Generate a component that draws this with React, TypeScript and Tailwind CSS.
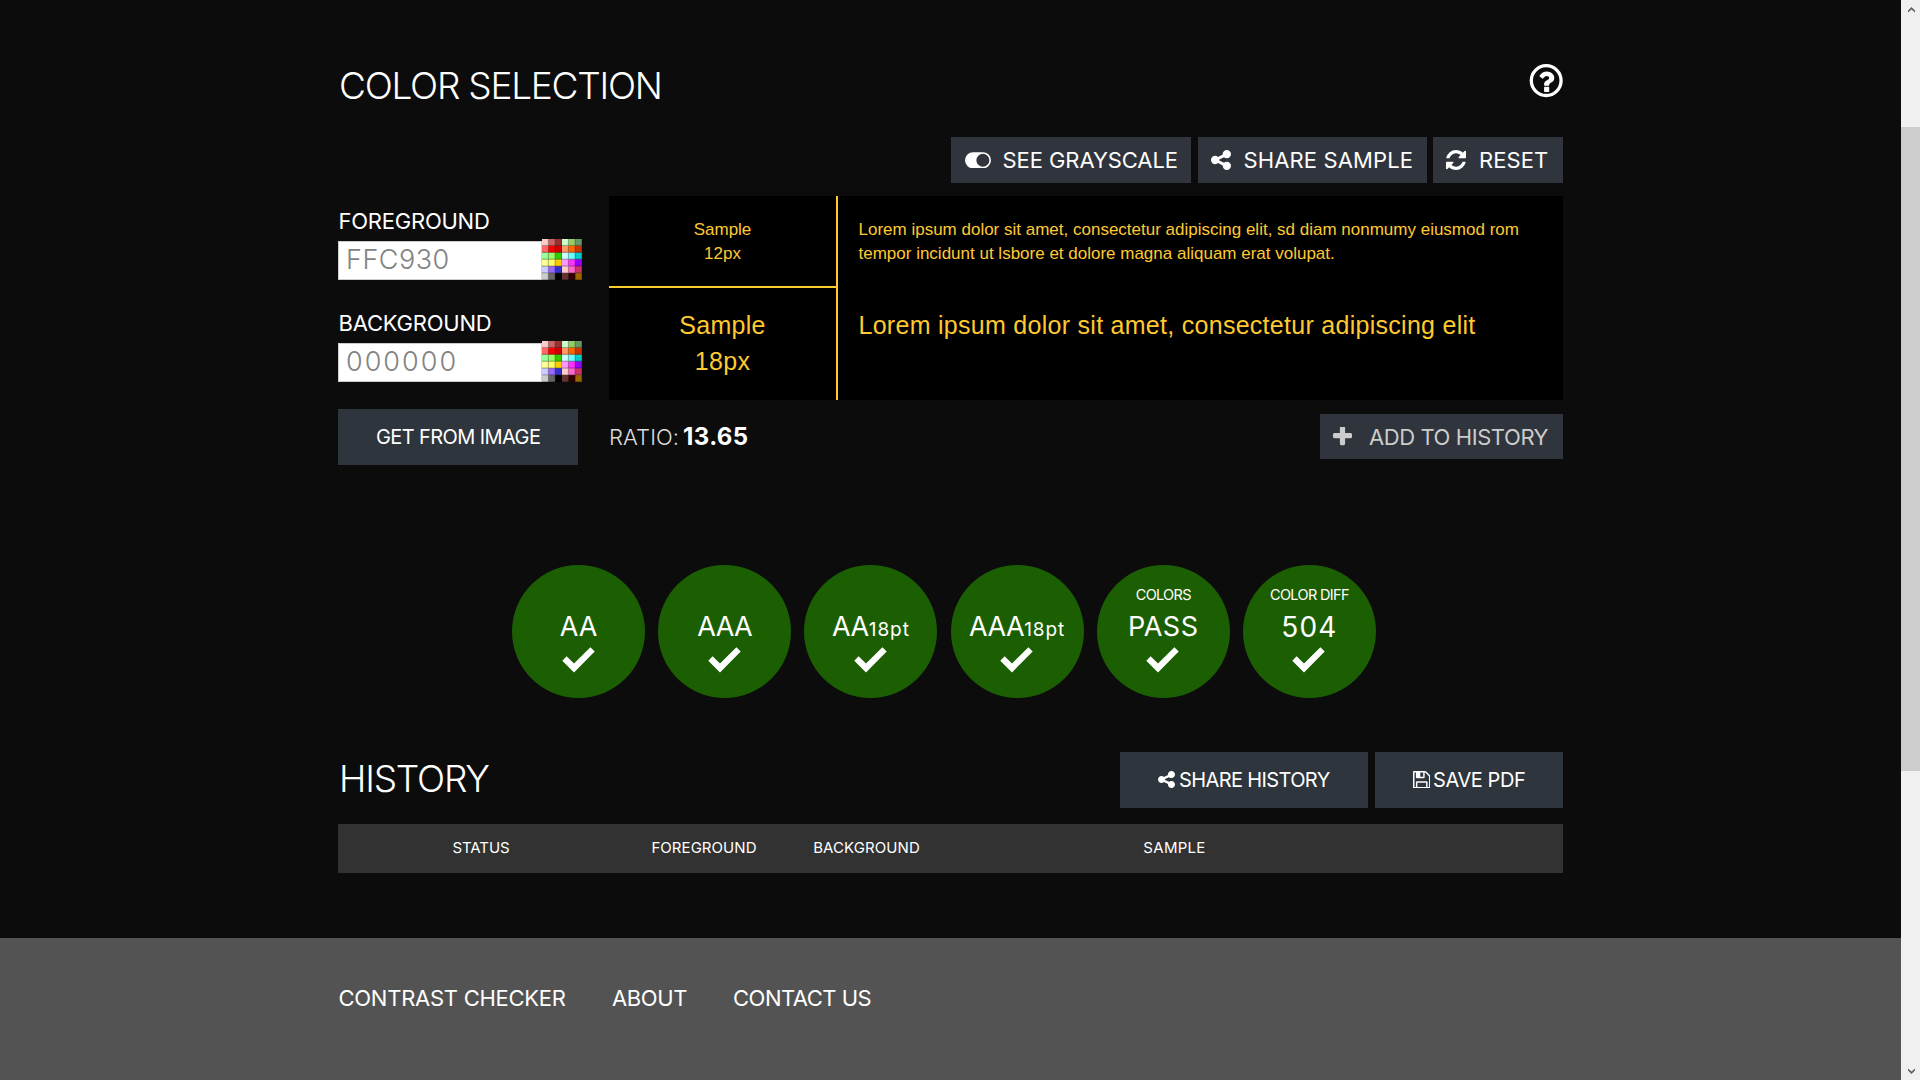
import React from "react";

const SHARE =
  "M1344 1024q133 0 226.5 93.5t93.5 226.5-93.5 226.5-226.5 93.5-226.5-93.5-93.5-226.5q0-12 2-34l-360-180q-92 86-218 86-133 0-226.5-93.5t-93.5-226.5 93.5-226.5 226.5-93.5q126 0 218 86l360-180q-2-22-2-34 0-133 93.5-226.5t226.5-93.5 226.5 93.5 93.5 226.5-93.5 226.5-226.5 93.5q-126 0-218-86l-360 180q2 22 2 34t-2 34l360 180q92-86 218-86z";
const REFRESH =
  "M1639 1056q0 5-1 7-64 268-268 434.5t-478 166.5q-146 0-282.5-55t-243.5-157l-129 129q-19 19-45 19t-45-19-19-45v-448q0-26 19-45t45-19h448q26 0 45 19t19 45-19 45l-137 137q71 66 161 102t187 36q134 0 250-65t186-179q11-17 53-117 8-23 30-23h192q13 0 22.5 9.5t9.5 22.5zm25-800v448q0 26-19 45t-45 19h-448q-26 0-45-19t-19-45 19-45l138-138q-148-137-349-137-134 0-250 65t-186 179q-11 17-53 117-8 23-30 23h-199q-13 0-22.5-9.5t-9.5-22.5v-7q65-268 270-434.5t480-166.5q146 0 284 55.5t245 156.5l130-129q19-19 45-19t45 19 19 45z";
const PLUS =
  "M1600 736v192q0 40-28 68t-68 28h-416v416q0 40-28 68t-68 28h-192q-40 0-68-28t-28-68v-416h-416q-40 0-68-28t-28-68v-192q0-40 28-68t68-28h416v-416q0-40 28-68t68-28h192q40 0 68 28t28 68v416h416q40 0 68 28t28 68z";
const QUESTION =
  "M1088 1256v240q0 16-12 28t-28 12h-240q-16 0-28-12t-12-28v-240q0-16 12-28t28-12h240q16 0 28 12t12 28zm316-600q0 54-15.5 101t-35 76.5-55 59.5-57.5 43.5-61 35.5q-41 23-68.5 65t-27.5 67q0 17-12 32.5t-28 15.5h-240q-15 0-25.5-18.5t-10.5-37.5v-45q0-83 65-156.5t143-108.5q59-27 84-56t25-76q0-42-46.5-74t-107.5-32q-65 0-108 29-35 25-107 115-13 16-31 16-12 0-25-8l-164-125q-13-10-15.5-25t5.5-28q160-266 464-266 80 0 161 31t146 83 106 127.5 41 158.5z";
const FLOPPY =
  "M512 1536h768v-384h-768v384zm896 0h128v-896q0-14-10-38.5t-20-34.5l-281-281q-10-10-34-20t-39-10v416q0 40-28 68t-68 28h-576q-40 0-68-28t-28-68v-416h-128v1280h128v-416q0-40 28-68t68-28h832q40 0 68 28t28 68v416zm-384-928v-320q0-13-9.5-22.5t-22.5-9.5h-192q-13 0-22.5 9.5t-9.5 22.5v320q0 13 9.5 22.5t22.5 9.5h192q13 0 22.5-9.5t9.5-22.5zm640 32v928q0 40-28 68t-68 28h-1344q-40 0-68-28t-28-68v-1344q0-40 28-68t68-28h928q40 0 88 20t76 48l280 280q28 28 48 76t20 88z";

function Glyph({ d, className }: { d: string; className: string }) {
  return (
    <svg viewBox="128 128 1536 1536" fill="currentColor" className={`shrink-0 ${className}`}>
      <path d={d} />
    </svg>
  );
}

const SWATCHES = [
  ["#ffcccc", "#cc6666", "#993333", "#ccffcc", "#99cc66", "#669966"],
  ["#ff6666", "#ff0000", "#cc0000", "#ff9966", "#ff6600", "#cc3300"],
  ["#99ff99", "#99ff66", "#33cc00", "#ccffff", "#66ffff", "#00cccc"],
  ["#ffff99", "#ffff66", "#ffcc00", "#ff99ff", "#ff33ff", "#9900ff"],
  ["#ccccff", "#9966ff", "#3333cc", "#ffcccc", "#ff66cc", "#cc3366"],
  ["#cccccc", "#666666", "#000000", "#663333", "#330000", "#996600"],
];

function Palette() {
  return (
    <svg viewBox="0 0 40 41" className="h-[41px] w-10 shrink-0">
      <rect width="40" height="41" fill="#2a1c1c" />
      {SWATCHES.map((row, y) =>
        row.map((c, x) => (
          <g key={`${x}-${y}`}>
            <rect x={x * 6.67} y={y * 6.83} width="6.67" height="6.83" fill={c} />
            <path
              d={`M${x * 6.67} ${y * 6.83 + 6.4}h6.3v-6.2`}
              fill="none"
              stroke="#000"
              strokeOpacity="0.28"
              strokeWidth="0.9"
            />
          </g>
        )),
      )}
    </svg>
  );
}

function ColorField({ value, className }: { value: string; className: string }) {
  return (
    <div className="flex items-end">
      <div className="flex h-[39px] w-[204px] items-center border border-[#ccc] bg-white pb-0.5 pl-[7px]">
        <span className={`text-[27px] leading-9 font-[350] text-[#828282] ${className}`}>{value}</span>
      </div>
      <Palette />
    </div>
  );
}

function Check() {
  return (
    <svg viewBox="0 0 33 26" className="mt-[4.5px] mr-px h-[26px] w-[33px] shrink-0">
      <path d="M0.3 13.8 4.6 9.2 12 16.4 28.4 0.3 32.7 4.5 12 25.4Z" fill="#fff" />
    </svg>
  );
}

type Result = { label?: string; value: string; suffix?: string; valueClass: string; labelClass?: string };

const RESULTS: Result[] = [
  { value: "AA", valueClass: "" },
  { value: "AAA", valueClass: "tracking-[-0.6px]" },
  { value: "AA", suffix: "18pt", valueClass: "tracking-[-0.4px]" },
  { value: "AAA", suffix: "18pt", valueClass: "tracking-[-0.5px]" },
  { label: "COLORS", value: "PASS", valueClass: "tracking-[0.5px]", labelClass: "tracking-[-0.7px]" },
  { label: "COLOR DIFF", value: "504", valueClass: "text-[28px] tracking-[1.2px]", labelClass: "tracking-[-0.65px]" },
];

export default function App() {
  return (
    <div className="flex h-[1080px] w-[1920px] overflow-hidden bg-[#0c0c0c] font-[Inter,sans-serif] whitespace-nowrap text-white">
      <div className="flex w-[1901px] flex-col">
        <main className="ml-[338px] h-[938px] w-[1225px] shrink-0">
          <header className="flex justify-between pt-16">
            <h1 className="h-11 pl-px text-[37px] leading-[44px] font-[330] tracking-[-1.25px]">COLOR SELECTION</h1>
            <svg viewBox="0 0 34 34" className="h-[34px] w-[34px]">
              <circle cx="17.2" cy="16.6" r="14.9" fill="none" stroke="#fff" strokeWidth="3.3" />
              <path d={QUESTION} fill="#fff" transform="translate(2.8 3.3) scale(0.016)" />
            </svg>
          </header>

          <div className="mt-[29px] flex h-[46px] justify-end text-[22px]">
            <button className="mr-[7px] flex w-60 items-center bg-[#30343c] pl-[13.5px]">
              <svg viewBox="0 0 2048 1280" className="mr-3 h-[16.5px] w-[26px] shrink-0">
                <path
                  fill="currentColor"
                  fillRule="evenodd"
                  d="M640 0h768a640 640 0 0 1 0 1280H640A640 640 0 0 1 640 0ZM1408 128a512 512 0 1 0 0 1024a512 512 0 1 0 0-1024Z"
                />
              </svg>
              <span className="tracking-[-0.07px]">SEE GRAYSCALE</span>
            </button>
            <button className="mr-1.5 flex w-[229px] items-center bg-[#30343c] pl-[13px]">
              <Glyph d={SHARE} className="mr-[12.5px] size-5" />
              <span className="tracking-[0.12px]">SHARE SAMPLE</span>
            </button>
            <button className="flex w-[130px] items-center bg-[#30343c] pl-[13px]">
              <Glyph d={REFRESH} className="mr-[13px] size-5" />
              <span className="tracking-[0.1px]">RESET</span>
            </button>
          </div>

          <div className="mt-[13px] flex h-[269px]">
            <section className="w-[271px] shrink-0">
              <div className="mt-2.5 mb-[3px] h-[30px] pl-[0.5px] text-[22px] leading-[30px] tracking-[-0.23px]">
                FOREGROUND
              </div>
              <ColorField value="FFC930" className="tracking-[0.5px]" />
              <div className="mt-7 mb-[3px] h-[30px] pl-[0.5px] text-[22px] leading-[30px] tracking-[-0.22px]">
                BACKGROUND
              </div>
              <ColorField value="000000" className="tracking-[2px]" />
              <button className="mt-[27px] flex h-14 w-60 items-center bg-[#2f353d] pb-px pl-[38px] text-[20px] tracking-[-0.59px]">
                GET FROM IMAGE
              </button>
            </section>

            <section className="flex-1">
              <div className="flex h-[204px] bg-black font-['Liberation_Sans',sans-serif] text-[#ffc930]">
                <div className="w-[229px] border-r-2 border-[#ffc930] text-center">
                  <div className="h-[92px] border-b-2 border-[#ffc930] pt-[21.5px] text-[17px] leading-6">
                    <div>Sample</div>
                    <div>12px</div>
                  </div>
                  <div className="pt-[19px] text-[25px] leading-9 tracking-[0.3px]">
                    <div>Sample</div>
                    <div>18px</div>
                  </div>
                </div>
                <div className="pl-[20.5px]">
                  <div className="h-[92px] pt-[21.5px] text-[17px] leading-6">
                    <div>
                      Lorem ipsum dolor sit amet, consectetur adipiscing elit, sd diam nonmumy eiusmod rom
                    </div>
                    <div>tempor incidunt ut lsbore et dolore magna aliquam erat volupat.</div>
                  </div>
                  <div className="pt-[19px] text-[25px] leading-9 tracking-[0.28px]">
                    Lorem ipsum dolor sit amet, consectetur adipiscing elit
                  </div>
                </div>
              </div>
              <div className="mt-3.5 flex h-[45px] items-center justify-between">
                <div className="flex items-baseline">
                  <span className="w-[74px] text-[22px] font-[350] tracking-[0.1px] text-[#ddd]">RATIO:</span>
                  <span className="text-[24px] font-bold tracking-[0.4px]">13.65</span>
                </div>
                <button className="flex h-[45px] w-[243px] items-center bg-[#30343c] pl-[13px] text-[22px] text-[#ccc]">
                  <svg viewBox="192 192 1408 1408" fill="currentColor" className="mr-[17px] h-[19px] w-[19px] shrink-0">
                    <path d={PLUS} />
                  </svg>
                  <span className="pt-px font-[370] tracking-[-0.42px]">ADD TO HISTORY</span>
                </button>
              </div>
            </section>
          </div>

          <div className="mt-[100px] ml-[174px] flex gap-[13.2px]">
            {RESULTS.map((r, i) => (
              <div key={i} className="flex size-[133px] shrink-0 flex-col items-center rounded-full bg-[#1c5f03]">
                <div className={`mt-5 h-5 text-[14.5px] leading-5 ${r.labelClass ?? ""}`}>{r.label}</div>
                <div className={`mt-[5.5px] h-8 text-[27px] leading-8 ${r.valueClass}`}>
                  {r.value}
                  {r.suffix && <span className="text-[19px] tracking-[0.9px]">{r.suffix}</span>}
                </div>
                <Check />
              </div>
            ))}
          </div>

          <div className="mt-[54px] flex h-14 justify-between">
            <h2 className="mt-[5px] h-11 pl-px text-[37px] leading-[44px] font-[330] tracking-[-1.2px]">HISTORY</h2>
            <div className="flex gap-[7px] text-[20px]">
              <button className="flex w-[248px] items-center bg-[#2f353d] pb-px pl-[38px]">
                <Glyph d={SHARE} className="mr-1 size-[17px]" />
                <span className="tracking-[-0.62px]">SHARE HISTORY</span>
              </button>
              <button className="flex w-[188px] items-center bg-[#2f353d] pb-px pl-[37.5px]">
                <Glyph d={FLOPPY} className="mr-[3px] size-[17.5px]" />
                <span className="tracking-[-0.42px]">SAVE PDF</span>
              </button>
            </div>
          </div>

          <div className="mt-4 grid h-[49px] grid-cols-[286px_160px_165px_451px] items-center bg-[#323232] pb-px text-center text-[15px]">
            <div className="tracking-[-0.09px]">STATUS</div>
            <div className="tracking-[0.05px]">FOREGROUND</div>
            <div className="tracking-[0.08px]">BACKGROUND</div>
            <div className="tracking-[0.28px]">SAMPLE</div>
          </div>
        </main>

        <footer className="flex flex-1 bg-[#535353] pl-[338.5px] text-[22px]">
          <nav className="mt-11 flex h-8 leading-8">
            <a className="w-[273.5px] tracking-[-0.26px]">CONTRAST CHECKER</a>
            <a className="w-[121px] tracking-[-0.4px]">ABOUT</a>
            <a className="tracking-[-0.5px]">CONTACT US</a>
          </nav>
        </footer>
      </div>

      <div className="flex w-[19px] flex-col justify-between bg-[#f0f0f0]">
        <svg viewBox="0 0 19 127" className="h-[127px] w-[19px]">
          <path d="M7 12.5V10.5L10.5 7 14 10.5V12.5L10.5 9.5Z" fill="#606060" />
        </svg>
        <div className="h-[644px] w-[19px] bg-[#cdcdcd]" />
        <div className="flex flex-1 items-end">
          <svg viewBox="0 0 19 18" className="h-[18px] w-[19px]">
            <path d="M7 6.5V8.5L10.5 12 14 8.5V6.5L10.5 9.5Z" fill="#606060" />
          </svg>
        </div>
      </div>
    </div>
  );
}
